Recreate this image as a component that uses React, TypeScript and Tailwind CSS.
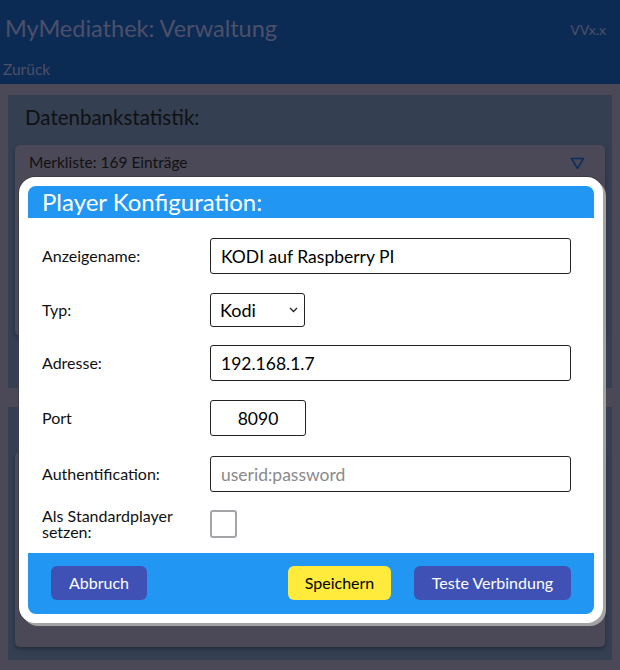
import React from 'react';

const font = { fontFamily: 'Lato, "Noto Sans", "Liberation Sans", sans-serif' };

function Row({ label, children, className = '' }: { label: React.ReactNode; children: React.ReactNode; className?: string }) {
  return (
    <div className={`flex items-center ${className}`}>
      <div className="w-[168px] shrink-0 text-[16px] leading-[16px] text-[#111]">
        <span className="block max-w-[145px]">{label}</span>
      </div>
      {children}
    </div>
  );
}

function PlayerDialog() {
  return (
    <div className="absolute left-[19px] top-[177px] w-[584px] h-[446px] bg-white rounded-[16px] p-[9px] shadow-[3px_3px_0_#a3a3a3,0_0_0_1px_#3f3e48]">
      <div className="h-[32px] bg-[#2196f3] rounded-t-[8px] pl-[14px] text-white text-[24px] leading-[32px]">
        Player Konfiguration:
      </div>
      <div className="pl-[14px] pr-[23px] pt-[20px]">
        <Row label="Anzeigename:">
          <input
            defaultValue="KODI auf Raspberry PI"
            className="w-[361px] h-[36px] border border-[#222] rounded-[3px] px-[10px] text-[17.5px] text-black outline-none"
          />
        </Row>
        <Row label="Typ:" className="mt-[18px] h-[36px]">
          <div className="relative w-[95px] h-[34px] border border-[#222] rounded-[3px] flex items-center pl-[9px] text-[18px] text-black">
            Kodi
            <svg className="absolute right-[6px] top-[13px]" width="9" height="6" viewBox="0 0 9 6">
              <path d="M1 1l3.5 3.5L8 1" fill="none" stroke="#222" strokeWidth="1.3" />
            </svg>
          </div>
        </Row>
        <Row label="Adresse:" className="mt-[17px]">
          <input
            defaultValue="192.168.1.7"
            className="w-[361px] h-[36px] border border-[#222] rounded-[3px] px-[10px] text-[17.5px] text-black outline-none"
          />
        </Row>
        <Row label="Port" className="mt-[19px]">
          <input
            defaultValue="8090"
            className="w-[96px] h-[36px] border border-[#222] rounded-[3px] text-center text-[17.5px] text-black outline-none"
          />
        </Row>
        <Row label="Authentification:" className="mt-[20px]">
          <input
            placeholder="userid:password"
            className="w-[361px] h-[36px] border border-[#222] rounded-[3px] px-[10px] text-[17.5px] text-black outline-none placeholder:text-[#8a8a8a]"
          />
        </Row>
        <Row label="Als Standardplayer setzen:" className="mt-[16px] h-[32px]">
          <div className="w-[27px] h-[28px] border-2 border-[#a4a4ab] rounded-[3px]" />
        </Row>
      </div>
      <div className="mt-[13px] h-[61px] bg-[#2196f3] rounded-b-[8px] px-[23px] pt-[13px] flex justify-between">
        <button className="w-[96px] h-[34px] rounded-[6px] bg-[#3f51b5] text-white text-[16px]">Abbruch</button>
        <div className="flex gap-[23px]">
          <button className="w-[103px] h-[34px] rounded-[6px] bg-[#ffeb3b] text-black text-[16px]">Speichern</button>
          <button className="w-[157px] h-[34px] rounded-[6px] bg-[#3f51b5] text-white text-[16px]">Teste Verbindung</button>
        </div>
      </div>
    </div>
  );
}

export default function App() {
  return (
    <div className="relative w-[620px] h-[670px] overflow-hidden bg-[#4b4958]" style={font}>
      <div className="h-[84px] bg-[#0b2b55] relative">
        <div className="pl-[5px] pt-[12px] text-[23.5px] leading-[32px] text-[#4d5068]">MyMediathek: Verwaltung</div>
        <div className="absolute right-[14px] top-[19px] text-[14px] text-[#4d5068]">VVx.x</div>
        <div className="pl-[3px] pt-[16px] text-[15.5px] leading-[18px] text-[#4d5068]">Zurück</div>
      </div>
      <div className="px-[8px] pt-[11px]">
        <div className="bg-[#343f52] h-[293px]">
          <div className="h-[45px] pl-[17px] text-[20.5px] leading-[45px] text-[#111]">Datenbankstatistik:</div>
          <div className="mx-[7px] mt-[5px] h-[191px] bg-[#4b4958] rounded-[5px] shadow-[0_2px_4px_rgba(0,0,0,0.3)]">
            <div className="flex items-center justify-between h-[36px] pl-[14px] pr-[20px] text-[15.5px] text-[#111]">
              <span>Merkliste: 169 Einträge</span>
              <svg width="15" height="13" viewBox="0 0 15 13">
                <path d="M1.5 1.5h12L7.5 11.5z" fill="none" stroke="#0e2e5a" strokeWidth="1.6" strokeLinejoin="round" />
              </svg>
            </div>
          </div>
        </div>
        <div className="bg-[#343f52] h-[253px] mt-[19px] pt-[45px]">
          <div className="mx-[7px] h-[195px] bg-[#4b4958] rounded-[5px] shadow-[0_2px_4px_rgba(0,0,0,0.3)]" />
        </div>
      </div>
      <PlayerDialog />
    </div>
  );
}
